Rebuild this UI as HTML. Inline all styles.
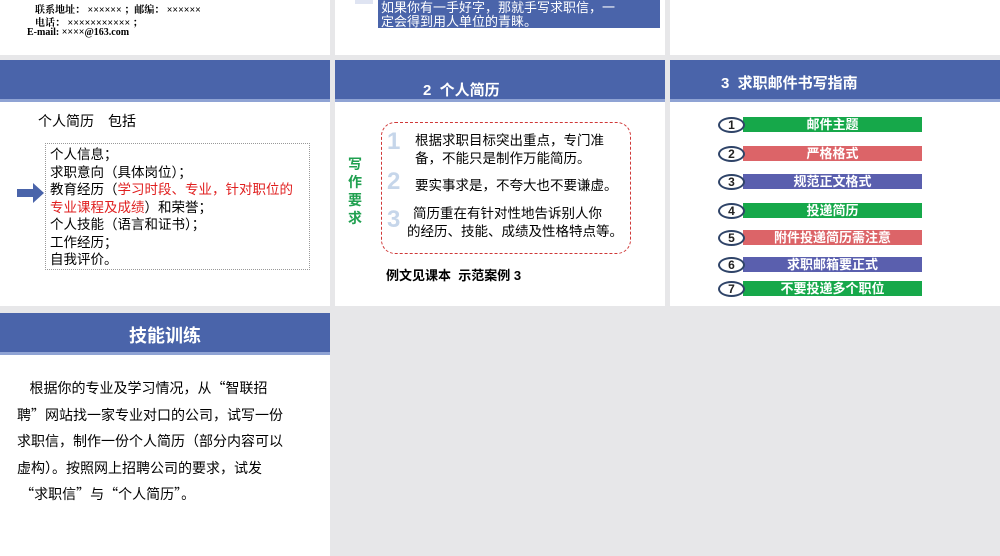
<!DOCTYPE html>
<html><head><meta charset="utf-8"><style>
*{margin:0;padding:0;box-sizing:border-box}
body{width:1000px;height:556px;background:#e7e7e9;position:relative;overflow:hidden;font-family:"Liberation Sans","Noto Sans CJK SC",sans-serif}
.p{position:absolute;background:#fff}
.a{position:absolute;white-space:nowrap}
.hd{position:absolute;left:0;right:0;top:0;height:42px;background:#4a64aa;border-bottom:3px solid #8fa3d4;color:#fff;font-weight:bold}
.bar{position:absolute;left:743px;width:179px;height:15px;color:#fff;font-weight:bold;font-size:13px;text-align:center;line-height:15px}
.c{position:absolute;left:718px;width:27px;height:16px;border:2px solid #2f4468;border-radius:50%;background:#fff;font-size:12px;font-weight:bold;text-align:center;line-height:12px;color:#222}
.cj{font-family:"Noto Sans CJK SC",sans-serif}
</style></head><body>
<div class="p" style="left:0;top:0;width:330px;height:55px">
<div class="a" style="left:35px;top:1px;font-size:10px;font-family:'Liberation Serif','Noto Serif CJK SC',serif;font-weight:bold">联系地址： ×××××× ；邮编： ××××××</div>
<div class="a" style="left:35px;top:14px;font-size:10px;font-family:'Liberation Serif','Noto Serif CJK SC',serif;font-weight:bold">电话： ××××××××××× ；</div>
<div class="a" style="left:27px;top:27px;font-size:10px;font-family:'Liberation Serif','Noto Serif CJK SC',serif;font-weight:bold">E-mail: ××××@163.com</div>
</div>
<div class="p" style="left:335px;top:0;width:330px;height:55px">
<div class="a" style="left:20px;top:0;width:18px;height:4px;background:#dfe4f2"></div>
<div class="a cj" style="left:43px;top:0;width:282px;height:28px;background:#4a64aa;color:#fff;font-size:13px;line-height:14px;padding-left:3px">如果你有一手好字，那就手写求职信，一<br>定会得到用人单位的青睐。</div>
</div>
<div class="p" style="left:670px;top:0;width:330px;height:55px"></div>

<div class="p" style="left:0;top:60px;width:330px;height:246px">
<div class="hd"></div>
<div class="a cj" style="left:38px;top:51px;font-size:14px">个人简历　包括</div>
<div class="a cj" style="left:45px;top:83px;width:265px;height:127px;border:1px dotted #999;font-size:13.5px;line-height:17.5px;padding:1px 4px;white-space:normal">个人信息；<br>求职意向（具体岗位）；<br>教育经历（<span style="color:#e02020">学习时段、专业，针对职位的专业课程及成绩</span>）和荣誉；<br>个人技能（语言和证书）；<br>工作经历；<br>自我评价。</div>
<svg class="a" style="left:17px;top:123px" width="28" height="20"><path d="M0 6H16V0L27 10L16 20V14H0Z" fill="#4a64aa"/></svg>
</div>

<div class="p" style="left:335px;top:60px;width:330px;height:246px">
<div class="hd"><div class="a" style="left:88px;top:19px;font-size:15px">2&nbsp; 个人简历</div></div>
<div class="a" style="left:13px;top:95px;font-size:14px;font-weight:bold;color:#20a050;line-height:18px;white-space:normal;width:16px">写作要求</div>
<div class="a" style="left:46px;top:62px;width:250px;height:132px;border:1.3px dashed #d03838;border-radius:14px"></div>
<div class="a" style="left:52px;top:68px;font-size:24px;font-weight:bold;color:#c6d6ea">1</div>
<div class="a" style="left:52px;top:108px;font-size:24px;font-weight:bold;color:#c6d6ea">2</div>
<div class="a" style="left:52px;top:146px;font-size:24px;font-weight:bold;color:#c6d6ea">3</div>
<div class="a cj" style="left:80px;top:70px;font-size:13.5px;line-height:18px">根据求职目标突出重点，专门准<br>备，不能只是制作万能简历。</div>
<div class="a cj" style="left:80px;top:114px;font-size:13.5px">要实事求是，不夸大也不要谦虚。</div>
<div class="a cj" style="left:72px;top:143px;font-size:13.5px;line-height:18px">&nbsp; 简历重在有针对性地告诉别人你<br>的经历、技能、成绩及性格特点等。</div>
<div class="a" style="left:51px;top:205px;font-size:13px;font-weight:bold">例文见课本&nbsp; 示范案例 3</div>
</div>

<div class="p" style="left:670px;top:60px;width:330px;height:246px">
<div class="hd"><div class="a" style="left:51px;top:12px;font-size:15px">3&nbsp; 求职邮件书写指南</div></div>
</div>
<div class="bar" style="top:117px;background:#16a84a">邮件主题</div>
<div class="bar" style="top:146px;background:#dc6468">严格格式</div>
<div class="bar" style="top:174px;background:#5a5fae">规范正文格式</div>
<div class="bar" style="top:203px;background:#16a84a">投递简历</div>
<div class="bar" style="top:230px;background:#dc6468">附件投递简历需注意</div>
<div class="bar" style="top:257px;background:#5a5fae">求职邮箱要正式</div>
<div class="bar" style="top:281px;background:#16a84a">不要投递多个职位</div>
<div class="c" style="top:117px">1</div>
<div class="c" style="top:146px">2</div>
<div class="c" style="top:174px">3</div>
<div class="c" style="top:203px">4</div>
<div class="c" style="top:230px">5</div>
<div class="c" style="top:257px">6</div>
<div class="c" style="top:281px">7</div>

<div class="p" style="left:0;top:313px;width:330px;height:243px">
<div class="hd"><div class="a" style="left:0;width:330px;text-align:center;top:9px;font-size:18px">技能训练</div></div>
<div class="a cj" style="left:17px;top:62px;font-size:14px;line-height:26.5px">&nbsp;&nbsp;&nbsp; 根据你的专业及学习情况，从“智联招<br>聘”网站找一家专业对口的公司，试写一份<br>求职信，制作一份个人简历（部分内容可以<br>虚构）。按照网上招聘公司的要求，试发<br>&nbsp;“求职信”与“个人简历”。</div>
</div>
</body></html>
